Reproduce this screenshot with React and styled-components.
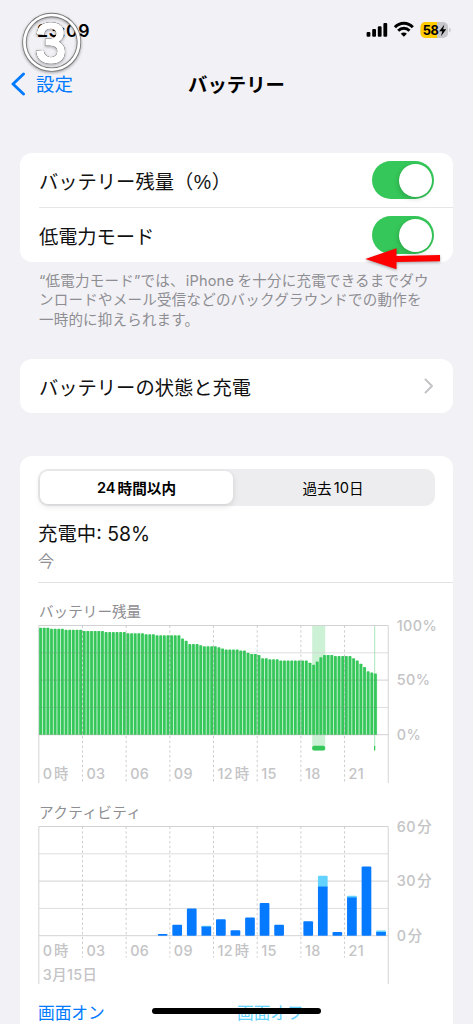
import React from "react";
import styled, { createGlobalStyle } from "styled-components";

const Global = createGlobalStyle`
  *{box-sizing:border-box}
  body{margin:0;background:#f2f1f6;font-family:Inter,"Noto Sans CJK JP",sans-serif;color:#111;overflow:hidden}
`;

const Screen = styled.div`
  position: relative;
  width: 473px;
  height: 1024px;
  overflow: hidden;
  background: #f2f1f6;
`;
const StatusBar = styled.header`
  display: flex;
  justify-content: space-between;
  align-items: center;
  height: 60px;
  padding: 0 21px 0 37px;
`;
const Time = styled.span`
  font-size: 17.7px;
  font-weight: 600;
  letter-spacing: 0.4px;
  color: #000;
`;
const StatusIcons = styled.svg`
  display: block;
  width: 88px;
  height: 24px;
`;
const NavBar = styled.nav`
  display: grid;
  grid-template-columns: 90px 1fr 90px;
  align-items: center;
  height: 48px;
`;
const Back = styled.div`
  display: flex;
  align-items: center;
  gap: 10px;
  padding-left: 10px;
  color: #007aff;
  font-size: 18.5px;
  line-height: 26px;
  white-space: nowrap;
  svg { display: block; }
`;
const Title = styled.h1`
  margin: 0;
  padding-top: 1px;
  text-align: center;
  font-size: 19.4px;
  line-height: 28px;
  font-weight: 600;
  color: #000;
`;
const Card = styled.section`
  margin: ${(p) => p.$top}px 20px 0;
  background: #fff;
  border-radius: ${(p) => (p.$open ? "12px 12px 0 0" : "12px")};
`;
const Row = styled.div`
  display: flex;
  align-items: center;
  justify-content: space-between;
  height: ${(p) => p.$height}px;
  margin-left: 19px;
  padding-right: 19px;
  font-size: 19.3px;
  white-space: nowrap;
  border-top: ${(p) => (p.$divided ? "1px solid #e6e6e8" : "0")};
`;
const Label = styled.span`
  padding-top: ${(p) => p.$drop || 0}px;
  letter-spacing: ${(p) => p.$track || 0}px;
`;
const Percent = styled.span`
  font-family: "Liberation Sans", sans-serif;
  font-size: 19.6px;
  margin: 0 0.5px;
`;
const Toggle = styled.span`
  display: flex;
  justify-content: flex-end;
  width: 62px;
  height: 38px;
  padding: 2.5px 2px;
  border-radius: 19px;
  background: #35c759;
  &::after {
    content: "";
    width: 33px;
    height: 33px;
    border-radius: 50%;
    background: #fff;
    box-shadow: -1px 2px 5px rgba(0, 0, 0, 0.16);
  }
`;
const Note = styled.p`
  margin: 9px 20px 0 39px;
  height: 58px;
  font-size: 14.5px;
  line-height: 19.4px;
  color: #8e8e92;
  white-space: nowrap;
`;
const NoteLine = styled.span`
  display: block;
  letter-spacing: ${(p) => p.$track}px;
`;
const Latin = styled.span`
  margin-left: ${(p) => p.$before || 0}px;
  margin-right: ${(p) => p.$after || 0}px;
`;
const Segments = styled.div`
  display: grid;
  grid-template-columns: 193px 1fr;
  height: 37px;
  margin: 0 18px;
  padding: 2px;
  border-radius: 10px;
  background: #ededef;
`;
const Segment = styled.div`
  display: flex;
  align-items: center;
  justify-content: center;
  border-radius: 8px;
  font-size: 14.6px;
  color: #000;
  font-weight: ${(p) => (p.$active ? 600 : 400)};
  background: ${(p) => (p.$active ? "#fff" : "transparent")};
  box-shadow: ${(p) => (p.$active ? "0 2px 6px rgba(0,0,0,.13)" : "none")};
`;
const ChartsBody = styled.div`
  height: 568px;
  padding-top: 13px;
`;
const Summary = styled.div`
  height: 77px;
  margin-left: 18px;
  padding-top: 14px;
  border-bottom: 1px solid #e3e3e6;
`;
const Charge = styled.div`
  font-size: 19.4px;
  line-height: 28px;
`;
const Now = styled.div`
  font-size: 16.3px;
  line-height: 26px;
  color: #8e8e92;
`;
const ChartTitle = styled.h2`
  margin: 0 0 0 19px;
  height: ${(p) => p.$height}px;
  padding-top: ${(p) => p.$pad}px;
  font-size: 14.6px;
  line-height: 20px;
  font-weight: 400;
  letter-spacing: ${(p) => p.$track || 0}px;
  color: #8e8e92;
`;
const Plot = styled.svg`
  display: block;
  overflow: visible;
  text { fill: #c4c4c6; font-size: 14.4px; font-weight: 500; letter-spacing: 0.35px; }
`;
const Legend = styled.div`
  display: grid;
  grid-template-columns: 199px 1fr;
  margin-left: 18px;
  padding-top: 14px;
  font-size: 16.7px;
  line-height: 26px;
`;
const LegendItem = styled.span`
  color: ${(p) => p.$color};
`;
const HomeIndicator = styled.div`
  position: absolute;
  left: 152px;
  top: 1008px;
  width: 169px;
  height: 6px;
  border-radius: 3px;
  background: #000;
`;
const Overlay = styled.svg`
  position: absolute;
  left: ${(p) => p.$x}px;
  top: ${(p) => p.$y}px;
  overflow: visible;
`;
const StepDigit = styled.text`
  font-family: "Liberation Sans", sans-serif;
  font-size: 55px;
  fill: #fff;
  stroke: #fff;
  stroke-width: 2.6px;
  filter: drop-shadow(0 0 0.5px #444) drop-shadow(0 0 0.4px #555);
`;

// Battery level over the day: [number of 15-minute samples, percent].
const runs = [
  [3, 98], [4, 97], [5, 96], [6, 95], [6, 94], [5, 93], [3, 92], [7, 91],
  [1, 88], [1, 86], [3, 83], [1, 82], [4, 81], [1, 80], [1, 79], [4, 78],
  [2, 77], [1, 75], [2, 74], [1, 73], [2, 70], [3, 69], [8, 68], [1, 66],
  [1, 64], [1, 67], [1, 71], [3, 73], [5, 72], [1, 70], [1, 68], [1, 65],
  [1, 62], [1, 58], [1, 57], [1, 56],
];
const levels = runs.flatMap(([n, v]) => Array(n).fill(v));

// Activity per hour: [hour, minutes with screen on, minutes with screen off].
const activity = [
  [8, 1, 0], [9, 6, 0], [10, 15, 0], [11, 5, 0.5], [12, 9, 0], [13, 3, 0],
  [14, 10, 0], [15, 18, 0], [16, 6, 0], [18, 8, 0], [19, 27, 6], [20, 2, 0],
  [21, 21, 1], [22, 38, 0], [23, 2, 0.8],
];
const hours = [["0", "時"], ["03"], ["06"], ["09"], ["12", "時"], ["15"], ["18"], ["21"]];
const X0 = 18.8;
const HOUR = 14.56;
const TOP = 6.5;
const SPAN = 109.2;
const BASE = TOP + SPAN;

function Lines({ bottom, dashBottom }) {
  const right = X0 + HOUR * 24;
  return (
    <g>
      {[0, 1, 2, 3, 4].map((i) => (
        <line key={i} x1={X0} x2={right} y1={TOP + (i * SPAN) / 4} y2={TOP + (i * SPAN) / 4} stroke="#d2d2d4" strokeOpacity={i % 2 ? 0.75 : 1} />
      ))}
      {[X0, right].map((x) => (
        <line key={x} x1={x} x2={x} y1={TOP} y2={bottom} stroke="#d4d4d6" />
      ))}
      {[1, 2, 3, 4, 5, 6, 7].map((i) => (
        <line key={i} x1={X0 + i * 43.68} x2={X0 + i * 43.68} y1={TOP} y2={dashBottom} stroke="#cdcdcf" strokeDasharray="2.4 2.4" />
      ))}
    </g>
  );
}

function Labels({ y, scale }) {
  return (
    <g>
      {hours.map(([n, unit], i) => (
        <text key={n} x={X0 + i * 43.68 + 4} y={y}>
          {n}
          {unit && <tspan dx="1.6">{unit}</tspan>}
        </text>
      ))}
      {scale.map(([n, unit, gap], i) => (
        <text key={n} x={376.8} y={TOP + (i * SPAN) / 2 + 5.2}>
          {n}
          <tspan dx={gap}>{unit}</tspan>
        </text>
      ))}
    </g>
  );
}

function BatteryChart() {
  return (
    <Plot width="433" height="172">
      <rect x={292.2} y={TOP} width={13} height={125} fill="#35c759" opacity=".25" />
      <rect x={354} y={TOP} width={1.2} height={125} fill="#35c759" opacity=".35" />
      <Lines bottom={164} dashBottom={163} />
      {levels.map((v, i) => {
        const h = (v * SPAN) / 100;
        return (
          <g key={i} fill="#35c759">
            <rect x={X0 + i * 3.64} y={BASE - h + 0.6} width={3.64} height={h - 0.6} opacity=".22" />
            <rect x={X0 + 0.4 + i * 3.64} y={BASE - h} width={2.75} height={h} rx=".6" />
          </g>
        );
      })}
      <g opacity=".25" stroke="#6f9d7b">
        <line x1={X0} x2={X0 + 57 * 3.64} y1={TOP + SPAN / 4} y2={TOP + SPAN / 4} />
        {[2, 3, 4].map((i) => (
          <line key={i} x1={X0} x2={357} y1={TOP + (i * SPAN) / 4} y2={TOP + (i * SPAN) / 4} />
        ))}
      </g>
      <g stroke="#8c8c8c" strokeDasharray="2.4 2.4" opacity=".4">
        {[1, 2, 3, 4, 5, 6, 7].map((i) => (
          <line key={i} x1={X0 + i * 43.68} x2={X0 + i * 43.68} y1={BASE - (levels[i * 12] * SPAN) / 100} y2={BASE} />
        ))}
      </g>
      <rect x={292.2} y={126.7} width={13} height={4.8} rx="2" fill="#35c759" />
      <rect x={354} y={126.7} width={1.2} height={4.8} rx=".5" fill="#35c759" />
      <Labels y={160} scale={[["100", "%", 0], ["50", "%", 0], ["0", "%", 0]]} />
    </Plot>
  );
}

function ActivityChart() {
  return (
    <Plot width="433" height="166">
      <Lines bottom={164} dashBottom={137.5} />
      <Labels y={135.5} scale={[["60", "分", 1.4], ["30", "分", 1.4], ["0", "分", 1.4]]} />
      {activity.map(([h, on, off]) => {
        const x = X0 + h * HOUR + 2.5;
        const a = (on * SPAN) / 60;
        const b = (off * SPAN) / 60;
        return (
          <g key={h}>
            {off > 0 && <rect x={x} y={BASE - a - b} width={9.7} height={b + 1.5} rx="1" fill="#64d2ff" />}
            <rect x={x} y={BASE - a} width={9.7} height={a} rx={off ? 0 : 1} fill="#057aff" />
          </g>
        );
      })}
      <text x={X0 + 4} y={160}>3月15日</text>
    </Plot>
  );
}

export default function App() {
  return (
    <Screen>
      <Global />
      <StatusBar>
        <Time>23:09</Time>
        <StatusIcons viewBox="0 0 88 24">
          <rect x="2.6" y="14" width="3.8" height="4.8" rx="1.1" />
          <rect x="8.2" y="11" width="3.8" height="7.8" rx="1.1" />
          <rect x="13.8" y="8.3" width="3.8" height="10.5" rx="1.1" />
          <rect x="19.4" y="5" width="3.8" height="13.8" rx="1.1" />
          <g fill="none" stroke="#000" strokeWidth="2.9">
            <path d="M30.9 9.3C35.8 3.8 43.9 3.8 48.8 9.3" />
            <path d="M34.2 12.7C37.3 9.5 42.4 9.5 45.5 12.7" />
          </g>
          <path d="M39.85 18.7L36.8 15.7C38.4 14.1 41.3 14.1 42.9 15.7Z" />
          <clipPath id="cell"><rect x="56.5" y="4" width="27.6" height="16" rx="5" /></clipPath>
          <g clipPath="url(#cell)">
            <rect x="56" y="4" width="29" height="16" fill="#c8c7cc" />
            <rect x="56" y="4" width="17" height="16" fill="#ffcc00" />
          </g>
          <path d="M85.2 9.7c2.1.5 2.1 4.1 0 4.6z" fill="#c8c7cc" />
          <text x="58.8" y="16.6" fontSize="12.8" fontWeight="700" letterSpacing="-.4">58</text>
          <path d="M80.4 6.5L75.2 13.2H78.3L77 18.3L82.2 11.3H79.1Z" />
        </StatusIcons>
      </StatusBar>
      <NavBar>
        <Back>
          <svg width="16" height="24" viewBox="0 0 16 24"><path d="M13.5 2L3 12l10.5 10" fill="none" stroke="#007aff" strokeWidth="2.9" strokeLinecap="round" strokeLinejoin="round" /></svg>
          <span>設定</span>
        </Back>
        <Title>バッテリー</Title>
      </NavBar>
      <Card $top={45}>
        <Row $height={54}>
          <Label $drop={1}>バッテリー残量（<Percent>%</Percent>）</Label>
          <Toggle />
        </Row>
        <Row $height={55} $divided>
          <Label $track={-0.1} $drop={1}>低電力モード</Label>
          <Toggle />
        </Row>
      </Card>
      <Note>
        <NoteLine $track={0.22}>“低電力モード”では、<Latin $before={1} $after={3.5}>iPhone</Latin>を十分に充電できるまでダウ</NoteLine>
        <NoteLine $track={0.24}>ンロードやメール受信などのバックグラウンドでの動作を</NoteLine>
        <NoteLine $track={0.2}>一時的に抑えられます。</NoteLine>
      </Note>
      <Card $top={30}>
        <Row $height={54}>
          <Label $drop={1}>バッテリーの状態と充電</Label>
          <svg width="10" height="18" viewBox="0 0 10 18"><path d="M1.5 2.5l6.5 6.5-6.5 6.5" fill="none" stroke="#c4c4c7" strokeWidth="2" strokeLinecap="round" strokeLinejoin="round" /></svg>
        </Row>
      </Card>
      <Card $top={43} $open>
        <ChartsBody>
          <Segments>
            <Segment $active>24<Latin $before={2}>時間以内</Latin></Segment>
            <Segment>過去<Latin $before={2}>10</Latin>日</Segment>
          </Segments>
          <Summary>
            <Charge>充電中: 58%</Charge>
            <Now>今</Now>
          </Summary>
          <ChartTitle $height={36} $pad={19}>バッテリー残量</ChartTitle>
          <BatteryChart />
          <ChartTitle $height={29} $pad={12} $track={0.4}>アクティビティ</ChartTitle>
          <ActivityChart />
          <Legend>
            <LegendItem $color="#007aff">画面オン</LegendItem>
            <LegendItem $color="#64d2ff">画面オフ</LegendItem>
          </Legend>
        </ChartsBody>
      </Card>
      <Overlay $x={360} $y={240} width="90" height="36">
        <path d="M5.3 19L36.5 8.3V16L80 15V21.3L36.5 22V29.3Z" fill="#fe0000" filter="drop-shadow(0 1px 1.5px rgba(0,0,0,.35))" />
      </Overlay>
      <Overlay $x={20} $y={10} width="64" height="64">
        <g filter="drop-shadow(0 1px 1.5px rgba(0,0,0,.35))">
          <circle cx="31.7" cy="32.3" r="27.3" fill="none" stroke="#777" strokeWidth="4.4" />
          <circle cx="31.7" cy="32.3" r="27.3" fill="none" stroke="#fff" strokeWidth="2.7" />
          <StepDigit x="30.9" y="51.5" textAnchor="middle">3</StepDigit>
        </g>
      </Overlay>
      <HomeIndicator />
    </Screen>
  );
}
